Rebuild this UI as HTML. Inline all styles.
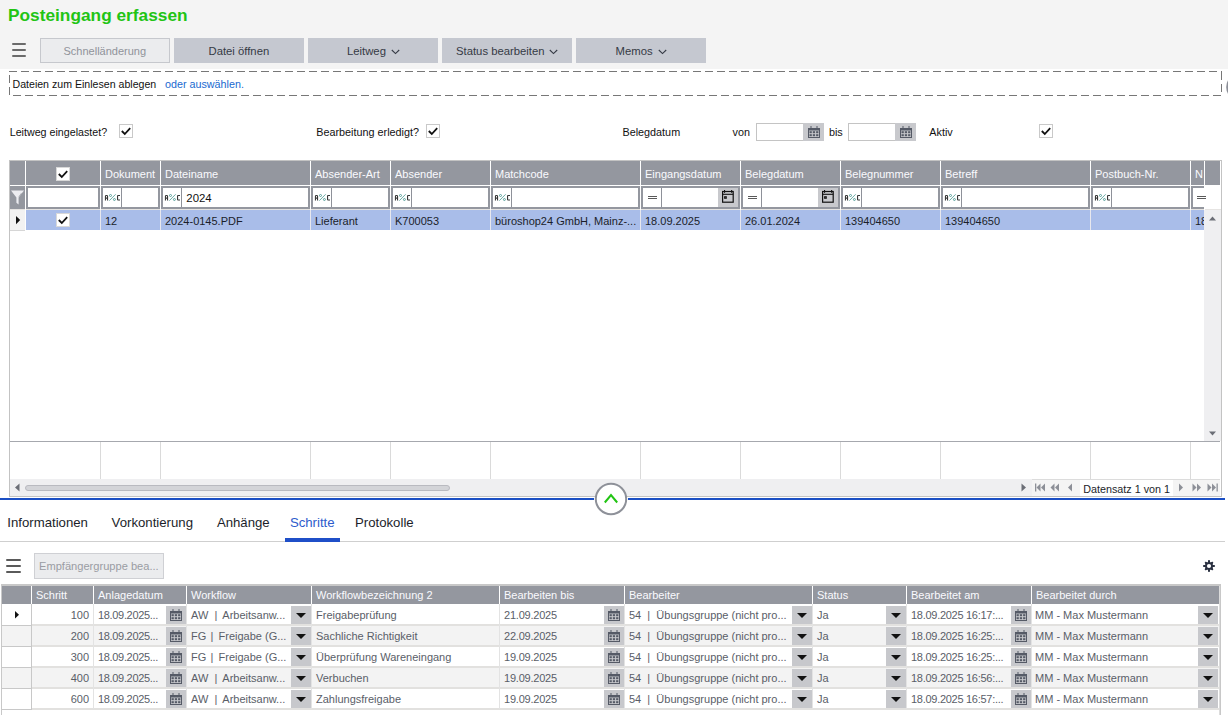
<!DOCTYPE html><html><head><meta charset="utf-8"><style>
html,body{margin:0;padding:0} body{width:1228px;height:715px;overflow:hidden;position:relative;background:#fff;font-family:"Liberation Sans", sans-serif}
div,span,svg{position:absolute;box-sizing:border-box}
.t{white-space:pre;line-height:1.149;}
</style></head><body>
<div style="left:0px;top:0px;width:1228px;height:69px;background:#f4f4f4"></div>
<span class="t" style="left:8px;top:6.34px;font-size:17.3px;color:#22c414;font-weight:700;">Posteingang erfassen</span>
<div style="left:12.3px;top:43.2px;width:14px;height:2px;background:#6b6b6b;border-radius:1px"></div>
<div style="left:12.3px;top:49.2px;width:14px;height:2px;background:#6b6b6b;border-radius:1px"></div>
<div style="left:12.3px;top:55.2px;width:14px;height:2px;background:#6b6b6b;border-radius:1px"></div>
<div style="left:40px;top:38px;width:130px;height:25px;background:#ebecee;border:1px solid #c6c8cd"></div>
<span class="t" style="left:63.5px;top:45.05px;font-size:11.0px;color:#90939a;font-weight:400;">Schnelländerung</span>
<div style="left:174px;top:38px;width:130px;height:25px;background:#c5c8d0"></div>
<span class="t" style="left:208.5px;top:44.77px;font-size:11.3px;color:#353a45;font-weight:400;">Datei öffnen</span>
<div style="left:308px;top:38px;width:130px;height:25px;background:#c5c8d0"></div>
<span class="t" style="left:347px;top:44.77px;font-size:11.3px;color:#353a45;font-weight:400;">Leitweg</span>
<svg style="left:391px;top:49px;" width="9" height="6" viewBox="0 0 9 6"><path d="M0.8 1 L4.5 4.6 L8.2 1" fill="none" stroke="#353a45" stroke-width="1.1"/></svg>
<div style="left:442px;top:38px;width:130px;height:25px;background:#c5c8d0"></div>
<span class="t" style="left:456px;top:44.77px;font-size:11.3px;color:#353a45;font-weight:400;">Status bearbeiten</span>
<svg style="left:549px;top:49px;" width="9" height="6" viewBox="0 0 9 6"><path d="M0.8 1 L4.5 4.6 L8.2 1" fill="none" stroke="#353a45" stroke-width="1.1"/></svg>
<div style="left:576px;top:38px;width:130px;height:25px;background:#c5c8d0"></div>
<span class="t" style="left:615.6px;top:44.77px;font-size:11.3px;color:#353a45;font-weight:400;">Memos</span>
<svg style="left:658px;top:49px;" width="9" height="6" viewBox="0 0 9 6"><path d="M0.8 1 L4.5 4.6 L8.2 1" fill="none" stroke="#353a45" stroke-width="1.1"/></svg>
<svg style="left:0px;top:60px;" width="1228" height="45" viewBox="0 0 1228 45"><line x1="9" y1="11.5" x2="1222" y2="11.5" stroke="#777" stroke-dasharray="8 4"/><line x1="13" y1="35.5" x2="1222" y2="35.5" stroke="#777" stroke-dasharray="8 4"/><line x1="9.5" y1="15" x2="9.5" y2="35" stroke="#777" stroke-dasharray="8 4"/><line x1="1221.5" y1="12" x2="1221.5" y2="36" stroke="#777" stroke-dasharray="8 4"/><circle cx="1239.6" cy="27" r="13.4" fill="#8b8e97"/></svg>
<span class="t" style="left:12.5px;top:78.41px;font-size:10.6px;color:#111;font-weight:400;">Dateien zum Einlesen ablegen</span>
<span class="t" style="left:165px;top:78.27px;font-size:10.75px;color:#1a6ad0;font-weight:400;">oder auswählen.</span>
<span class="t" style="left:9.7px;top:126.32px;font-size:10.7px;color:#111;font-weight:400;">Leitweg eingelastet?</span>
<svg style="left:119px;top:124px;" width="14" height="14" viewBox="0 0 14 14"><rect x="0.5" y="0.5" width="13" height="13" fill="#fff" stroke="#c9c9c9"/><path d="M2.8 7 L5.8 10 L11.2 4.2" fill="none" stroke="#111" stroke-width="1.8"/></svg>
<span class="t" style="left:316.3px;top:126.23px;font-size:10.8px;color:#111;font-weight:400;">Bearbeitung erledigt?</span>
<svg style="left:426px;top:124px;" width="14" height="14" viewBox="0 0 14 14"><rect x="0.5" y="0.5" width="13" height="13" fill="#fff" stroke="#c9c9c9"/><path d="M2.8 7 L5.8 10 L11.2 4.2" fill="none" stroke="#111" stroke-width="1.8"/></svg>
<span class="t" style="left:622.5px;top:126.23px;font-size:10.8px;color:#111;font-weight:400;">Belegdatum</span>
<span class="t" style="left:732.5px;top:126.23px;font-size:10.8px;color:#111;font-weight:400;">von</span>
<div style="left:756px;top:123px;width:68px;height:18px;background:#fff;border:1px solid #c4c4c4"></div>
<div style="left:803px;top:123px;width:21px;height:18px;background:#c8c9cd"></div>
<svg style="left:807.5px;top:126px;" width="12" height="12" viewBox="0 0 12 12"><rect x="0" y="2" width="12" height="10" fill="#555a66"/><rect x="2.5" y="0" width="1" height="3" fill="#555a66"/><rect x="8.5" y="0" width="1" height="3" fill="#555a66"/><rect x="1" y="4.5" width="10" height="6.5" fill="#c8c9cd"/><rect x="1.5" y="5.2" width="2.3" height="2" fill="#555a66"/><rect x="1.5" y="8.2" width="2.3" height="2" fill="#555a66"/><rect x="4.8" y="5.2" width="2.3" height="2" fill="#555a66"/><rect x="4.8" y="8.2" width="2.3" height="2" fill="#555a66"/><rect x="8.1" y="5.2" width="2.3" height="2" fill="#555a66"/><rect x="8.1" y="8.2" width="2.3" height="2" fill="#555a66"/></svg>
<div style="left:848px;top:123px;width:68px;height:18px;background:#fff;border:1px solid #c4c4c4"></div>
<div style="left:895px;top:123px;width:21px;height:18px;background:#c8c9cd"></div>
<svg style="left:899.5px;top:126px;" width="12" height="12" viewBox="0 0 12 12"><rect x="0" y="2" width="12" height="10" fill="#555a66"/><rect x="2.5" y="0" width="1" height="3" fill="#555a66"/><rect x="8.5" y="0" width="1" height="3" fill="#555a66"/><rect x="1" y="4.5" width="10" height="6.5" fill="#c8c9cd"/><rect x="1.5" y="5.2" width="2.3" height="2" fill="#555a66"/><rect x="1.5" y="8.2" width="2.3" height="2" fill="#555a66"/><rect x="4.8" y="5.2" width="2.3" height="2" fill="#555a66"/><rect x="4.8" y="8.2" width="2.3" height="2" fill="#555a66"/><rect x="8.1" y="5.2" width="2.3" height="2" fill="#555a66"/><rect x="8.1" y="8.2" width="2.3" height="2" fill="#555a66"/></svg>
<span class="t" style="left:828.9px;top:126.23px;font-size:10.8px;color:#111;font-weight:400;">bis</span>
<span class="t" style="left:929.3px;top:126.23px;font-size:10.8px;color:#111;font-weight:400;">Aktiv</span>
<svg style="left:1039px;top:124px;" width="14" height="14" viewBox="0 0 14 14"><rect x="0.5" y="0.5" width="13" height="13" fill="#fff" stroke="#c9c9c9"/><path d="M2.8 7 L5.8 10 L11.2 4.2" fill="none" stroke="#111" stroke-width="1.8"/></svg>
<div style="left:9px;top:160px;width:1213px;height:337px;border:1px solid #c3c3c3;background:#fff"></div>
<div style="left:10px;top:161px;width:1210px;height:24px;background:#94979f"></div>
<div style="left:10px;top:186px;width:1195px;height:23px;background:#94979f"></div>
<div style="left:10px;top:209px;width:1211px;height:1px;background:#e6e4e2"></div>
<div style="left:1205px;top:186px;width:16px;height:23px;background:#fff"></div>
<div style="left:10px;top:185px;width:1195px;height:1px;background:#fff"></div>
<div style="left:25px;top:161px;width:1px;height:49px;background:#fff"></div>
<div style="left:100px;top:161px;width:1px;height:49px;background:#fff"></div>
<div style="left:160px;top:161px;width:1px;height:49px;background:#fff"></div>
<div style="left:310px;top:161px;width:1px;height:49px;background:#fff"></div>
<div style="left:390px;top:161px;width:1px;height:49px;background:#fff"></div>
<div style="left:490px;top:161px;width:1px;height:49px;background:#fff"></div>
<div style="left:640px;top:161px;width:1px;height:49px;background:#fff"></div>
<div style="left:740px;top:161px;width:1px;height:49px;background:#fff"></div>
<div style="left:840px;top:161px;width:1px;height:49px;background:#fff"></div>
<div style="left:940px;top:161px;width:1px;height:49px;background:#fff"></div>
<div style="left:1090px;top:161px;width:1px;height:49px;background:#fff"></div>
<div style="left:1190px;top:161px;width:1px;height:49px;background:#fff"></div>
<div style="left:1204px;top:161px;width:1px;height:49px;background:#fff"></div>
<div style="left:101px;top:161px;width:59px;height:24px;overflow:hidden"><span class="t" style="left:4px;top:7.24px;font-size:11px;color:#fafafe">Dokument</span></div>
<div style="left:161px;top:161px;width:149px;height:24px;overflow:hidden"><span class="t" style="left:4px;top:7.24px;font-size:11px;color:#fafafe">Dateiname</span></div>
<div style="left:311px;top:161px;width:79px;height:24px;overflow:hidden"><span class="t" style="left:4px;top:7.24px;font-size:11px;color:#fafafe">Absender-Art</span></div>
<div style="left:391px;top:161px;width:99px;height:24px;overflow:hidden"><span class="t" style="left:4px;top:7.24px;font-size:11px;color:#fafafe">Absender</span></div>
<div style="left:491px;top:161px;width:149px;height:24px;overflow:hidden"><span class="t" style="left:4px;top:7.24px;font-size:11px;color:#fafafe">Matchcode</span></div>
<div style="left:641px;top:161px;width:99px;height:24px;overflow:hidden"><span class="t" style="left:4px;top:7.24px;font-size:11px;color:#fafafe">Eingangsdatum</span></div>
<div style="left:741px;top:161px;width:99px;height:24px;overflow:hidden"><span class="t" style="left:4px;top:7.24px;font-size:11px;color:#fafafe">Belegdatum</span></div>
<div style="left:841px;top:161px;width:99px;height:24px;overflow:hidden"><span class="t" style="left:4px;top:7.24px;font-size:11px;color:#fafafe">Belegnummer</span></div>
<div style="left:941px;top:161px;width:149px;height:24px;overflow:hidden"><span class="t" style="left:4px;top:7.24px;font-size:11px;color:#fafafe">Betreff</span></div>
<div style="left:1091px;top:161px;width:99px;height:24px;overflow:hidden"><span class="t" style="left:4px;top:7.24px;font-size:11px;color:#fafafe">Postbuch-Nr.</span></div>
<div style="left:1191px;top:161px;width:13px;height:24px;overflow:hidden"><span class="t" style="left:4px;top:7.24px;font-size:11px;color:#fafafe">N</span></div>
<svg style="left:56px;top:167px;" width="14" height="14" viewBox="0 0 14 14"><rect x="0.5" y="0.5" width="13" height="13" fill="#fff" stroke="#d8d8d8"/><path d="M2.8 7 L5.8 10 L11.2 4.2" fill="none" stroke="#111" stroke-width="1.8"/></svg>
<svg style="left:11px;top:190px;" width="13" height="19" viewBox="0 0 13 19"><path d="M0 0.5 H13 L7.6 7.5 V14.5 L5.4 12.8 V7.5 Z" fill="#ececf0"/><path d="M7.8 6.8 L10.6 3" stroke="#a9abb2" stroke-width="0.9"/></svg>
<div style="left:28px;top:188px;width:70px;height:19px;background:#fff"></div>
<div style="left:103px;top:188px;width:55px;height:19px;background:#fff"></div>
<div style="left:121px;top:188px;width:1px;height:19px;background:#8e9199"></div>
<svg style="left:104px;top:193.6px;" width="17" height="8" viewBox="0 0 17 8"><path d="M1.45 6.5 V2.3 Q1.45 1.45 2.3 1.45 H2.7 Q3.55 1.45 3.55 2.3 V6.5 M1.45 4.1 H3.55" fill="none" stroke="#383838" stroke-width="1.1"/><path d="M5.4 6.6 L11.6 0.3" stroke="#5aa39c" stroke-width="0.9"/><circle cx="6.5" cy="1.5" r="1" fill="none" stroke="#5aa39c" stroke-width="1"/><circle cx="10.4" cy="5.5" r="1" fill="none" stroke="#5aa39c" stroke-width="1"/><path d="M16 1.55 H14.1 Q13.55 1.55 13.55 2.1 V5.4 Q13.55 5.95 14.1 5.95 H16" fill="none" stroke="#383838" stroke-width="1.1"/></svg>
<div style="left:163px;top:188px;width:145px;height:19px;background:#fff"></div>
<div style="left:181px;top:188px;width:1px;height:19px;background:#8e9199"></div>
<svg style="left:164px;top:193.6px;" width="17" height="8" viewBox="0 0 17 8"><path d="M1.45 6.5 V2.3 Q1.45 1.45 2.3 1.45 H2.7 Q3.55 1.45 3.55 2.3 V6.5 M1.45 4.1 H3.55" fill="none" stroke="#383838" stroke-width="1.1"/><path d="M5.4 6.6 L11.6 0.3" stroke="#5aa39c" stroke-width="0.9"/><circle cx="6.5" cy="1.5" r="1" fill="none" stroke="#5aa39c" stroke-width="1"/><circle cx="10.4" cy="5.5" r="1" fill="none" stroke="#5aa39c" stroke-width="1"/><path d="M16 1.55 H14.1 Q13.55 1.55 13.55 2.1 V5.4 Q13.55 5.95 14.1 5.95 H16" fill="none" stroke="#383838" stroke-width="1.1"/></svg>
<div style="left:313px;top:188px;width:75px;height:19px;background:#fff"></div>
<div style="left:331px;top:188px;width:1px;height:19px;background:#8e9199"></div>
<svg style="left:314px;top:193.6px;" width="17" height="8" viewBox="0 0 17 8"><path d="M1.45 6.5 V2.3 Q1.45 1.45 2.3 1.45 H2.7 Q3.55 1.45 3.55 2.3 V6.5 M1.45 4.1 H3.55" fill="none" stroke="#383838" stroke-width="1.1"/><path d="M5.4 6.6 L11.6 0.3" stroke="#5aa39c" stroke-width="0.9"/><circle cx="6.5" cy="1.5" r="1" fill="none" stroke="#5aa39c" stroke-width="1"/><circle cx="10.4" cy="5.5" r="1" fill="none" stroke="#5aa39c" stroke-width="1"/><path d="M16 1.55 H14.1 Q13.55 1.55 13.55 2.1 V5.4 Q13.55 5.95 14.1 5.95 H16" fill="none" stroke="#383838" stroke-width="1.1"/></svg>
<div style="left:393px;top:188px;width:95px;height:19px;background:#fff"></div>
<div style="left:411px;top:188px;width:1px;height:19px;background:#8e9199"></div>
<svg style="left:394px;top:193.6px;" width="17" height="8" viewBox="0 0 17 8"><path d="M1.45 6.5 V2.3 Q1.45 1.45 2.3 1.45 H2.7 Q3.55 1.45 3.55 2.3 V6.5 M1.45 4.1 H3.55" fill="none" stroke="#383838" stroke-width="1.1"/><path d="M5.4 6.6 L11.6 0.3" stroke="#5aa39c" stroke-width="0.9"/><circle cx="6.5" cy="1.5" r="1" fill="none" stroke="#5aa39c" stroke-width="1"/><circle cx="10.4" cy="5.5" r="1" fill="none" stroke="#5aa39c" stroke-width="1"/><path d="M16 1.55 H14.1 Q13.55 1.55 13.55 2.1 V5.4 Q13.55 5.95 14.1 5.95 H16" fill="none" stroke="#383838" stroke-width="1.1"/></svg>
<div style="left:493px;top:188px;width:145px;height:19px;background:#fff"></div>
<div style="left:511px;top:188px;width:1px;height:19px;background:#8e9199"></div>
<svg style="left:494px;top:193.6px;" width="17" height="8" viewBox="0 0 17 8"><path d="M1.45 6.5 V2.3 Q1.45 1.45 2.3 1.45 H2.7 Q3.55 1.45 3.55 2.3 V6.5 M1.45 4.1 H3.55" fill="none" stroke="#383838" stroke-width="1.1"/><path d="M5.4 6.6 L11.6 0.3" stroke="#5aa39c" stroke-width="0.9"/><circle cx="6.5" cy="1.5" r="1" fill="none" stroke="#5aa39c" stroke-width="1"/><circle cx="10.4" cy="5.5" r="1" fill="none" stroke="#5aa39c" stroke-width="1"/><path d="M16 1.55 H14.1 Q13.55 1.55 13.55 2.1 V5.4 Q13.55 5.95 14.1 5.95 H16" fill="none" stroke="#383838" stroke-width="1.1"/></svg>
<div style="left:643px;top:188px;width:95px;height:19px;background:#fff"></div>
<div style="left:661px;top:188px;width:1px;height:19px;background:#8e9199"></div>
<svg style="left:648px;top:196px;" width="10" height="4" viewBox="0 0 10 4"><rect x="0" y="0" width="9" height="1" fill="#5a5a5a"/><rect x="0" y="2" width="9" height="1" fill="#5a5a5a"/></svg>
<div style="left:718px;top:188px;width:20px;height:19px;background:#c8c9cd"></div>
<svg style="left:722px;top:190px;" width="12" height="14" viewBox="0 0 12 14"><rect x="0.6" y="1.5" width="10.6" height="10.7" fill="none" stroke="#111" stroke-width="1.2"/><line x1="0.6" y1="4.3" x2="11.2" y2="4.3" stroke="#111" stroke-width="1.1"/><rect x="2" y="0" width="1.1" height="2.8" fill="#111"/><rect x="9.1" y="0" width="1.1" height="2.8" fill="#111"/><rect x="2.6" y="6.7" width="1.7" height="1.6" fill="none" stroke="#111" stroke-width="1"/></svg>
<div style="left:743px;top:188px;width:95px;height:19px;background:#fff"></div>
<div style="left:761px;top:188px;width:1px;height:19px;background:#8e9199"></div>
<svg style="left:748px;top:196px;" width="10" height="4" viewBox="0 0 10 4"><rect x="0" y="0" width="9" height="1" fill="#5a5a5a"/><rect x="0" y="2" width="9" height="1" fill="#5a5a5a"/></svg>
<div style="left:818px;top:188px;width:20px;height:19px;background:#c8c9cd"></div>
<svg style="left:822px;top:190px;" width="12" height="14" viewBox="0 0 12 14"><rect x="0.6" y="1.5" width="10.6" height="10.7" fill="none" stroke="#111" stroke-width="1.2"/><line x1="0.6" y1="4.3" x2="11.2" y2="4.3" stroke="#111" stroke-width="1.1"/><rect x="2" y="0" width="1.1" height="2.8" fill="#111"/><rect x="9.1" y="0" width="1.1" height="2.8" fill="#111"/><rect x="2.6" y="6.7" width="1.7" height="1.6" fill="none" stroke="#111" stroke-width="1"/></svg>
<div style="left:843px;top:188px;width:95px;height:19px;background:#fff"></div>
<div style="left:861px;top:188px;width:1px;height:19px;background:#8e9199"></div>
<svg style="left:844px;top:193.6px;" width="17" height="8" viewBox="0 0 17 8"><path d="M1.45 6.5 V2.3 Q1.45 1.45 2.3 1.45 H2.7 Q3.55 1.45 3.55 2.3 V6.5 M1.45 4.1 H3.55" fill="none" stroke="#383838" stroke-width="1.1"/><path d="M5.4 6.6 L11.6 0.3" stroke="#5aa39c" stroke-width="0.9"/><circle cx="6.5" cy="1.5" r="1" fill="none" stroke="#5aa39c" stroke-width="1"/><circle cx="10.4" cy="5.5" r="1" fill="none" stroke="#5aa39c" stroke-width="1"/><path d="M16 1.55 H14.1 Q13.55 1.55 13.55 2.1 V5.4 Q13.55 5.95 14.1 5.95 H16" fill="none" stroke="#383838" stroke-width="1.1"/></svg>
<div style="left:943px;top:188px;width:145px;height:19px;background:#fff"></div>
<div style="left:961px;top:188px;width:1px;height:19px;background:#8e9199"></div>
<svg style="left:944px;top:193.6px;" width="17" height="8" viewBox="0 0 17 8"><path d="M1.45 6.5 V2.3 Q1.45 1.45 2.3 1.45 H2.7 Q3.55 1.45 3.55 2.3 V6.5 M1.45 4.1 H3.55" fill="none" stroke="#383838" stroke-width="1.1"/><path d="M5.4 6.6 L11.6 0.3" stroke="#5aa39c" stroke-width="0.9"/><circle cx="6.5" cy="1.5" r="1" fill="none" stroke="#5aa39c" stroke-width="1"/><circle cx="10.4" cy="5.5" r="1" fill="none" stroke="#5aa39c" stroke-width="1"/><path d="M16 1.55 H14.1 Q13.55 1.55 13.55 2.1 V5.4 Q13.55 5.95 14.1 5.95 H16" fill="none" stroke="#383838" stroke-width="1.1"/></svg>
<div style="left:1093px;top:188px;width:95px;height:19px;background:#fff"></div>
<div style="left:1111px;top:188px;width:1px;height:19px;background:#8e9199"></div>
<svg style="left:1094px;top:193.6px;" width="17" height="8" viewBox="0 0 17 8"><path d="M1.45 6.5 V2.3 Q1.45 1.45 2.3 1.45 H2.7 Q3.55 1.45 3.55 2.3 V6.5 M1.45 4.1 H3.55" fill="none" stroke="#383838" stroke-width="1.1"/><path d="M5.4 6.6 L11.6 0.3" stroke="#5aa39c" stroke-width="0.9"/><circle cx="6.5" cy="1.5" r="1" fill="none" stroke="#5aa39c" stroke-width="1"/><circle cx="10.4" cy="5.5" r="1" fill="none" stroke="#5aa39c" stroke-width="1"/><path d="M16 1.55 H14.1 Q13.55 1.55 13.55 2.1 V5.4 Q13.55 5.95 14.1 5.95 H16" fill="none" stroke="#383838" stroke-width="1.1"/></svg>
<div style="left:1193px;top:188px;width:11px;height:19px;background:#fff"></div>
<svg style="left:1197px;top:196px;" width="10" height="4" viewBox="0 0 10 4"><rect x="0" y="0" width="9" height="1" fill="#5a5a5a"/><rect x="0" y="2" width="9" height="1" fill="#5a5a5a"/></svg>
<span class="t" style="left:186.3px;top:191.68px;font-size:11.4px;color:#111;font-weight:400;">2024</span>
<div style="left:10px;top:210px;width:15px;height:20px;background:#f2f2f2"></div>
<div style="left:26px;top:210px;width:1179px;height:20px;background:#a9bde9"></div>
<div style="left:100px;top:210px;width:1px;height:20px;background:#e8e8ee"></div>
<div style="left:160px;top:210px;width:1px;height:20px;background:#e8e8ee"></div>
<div style="left:310px;top:210px;width:1px;height:20px;background:#e8e8ee"></div>
<div style="left:390px;top:210px;width:1px;height:20px;background:#e8e8ee"></div>
<div style="left:490px;top:210px;width:1px;height:20px;background:#e8e8ee"></div>
<div style="left:640px;top:210px;width:1px;height:20px;background:#e8e8ee"></div>
<div style="left:740px;top:210px;width:1px;height:20px;background:#e8e8ee"></div>
<div style="left:840px;top:210px;width:1px;height:20px;background:#e8e8ee"></div>
<div style="left:940px;top:210px;width:1px;height:20px;background:#e8e8ee"></div>
<div style="left:1090px;top:210px;width:1px;height:20px;background:#e8e8ee"></div>
<div style="left:1190px;top:210px;width:1px;height:20px;background:#e8e8ee"></div>
<div style="left:1204px;top:210px;width:1px;height:20px;background:#e8e8ee"></div>
<svg style="left:16px;top:216px;" width="5" height="9" viewBox="0 0 5 9"><path d="M0 0 L4.2 4.1 L0 8.2 Z" fill="#111"/></svg>
<svg style="left:56px;top:213px;" width="14" height="14" viewBox="0 0 14 14"><rect x="0.5" y="0.5" width="13" height="13" fill="#fff" stroke="#d8d8d8"/><path d="M2.8 7 L5.8 10 L11.2 4.2" fill="none" stroke="#111" stroke-width="1.8"/></svg>
<div style="left:101px;top:210px;width:59px;height:20px;overflow:hidden"><span class="t" style="left:4px;top:5.04px;font-size:11px;color:#1b1e2a">12</span></div>
<div style="left:161px;top:210px;width:149px;height:20px;overflow:hidden"><span class="t" style="left:4px;top:5.04px;font-size:11px;color:#1b1e2a">2024-0145.PDF</span></div>
<div style="left:311px;top:210px;width:79px;height:20px;overflow:hidden"><span class="t" style="left:4px;top:5.04px;font-size:11px;color:#1b1e2a">Lieferant</span></div>
<div style="left:391px;top:210px;width:99px;height:20px;overflow:hidden"><span class="t" style="left:4px;top:5.04px;font-size:11px;color:#1b1e2a">K700053</span></div>
<div style="left:491px;top:210px;width:149px;height:20px;overflow:hidden"><span class="t" style="left:4px;top:5.04px;font-size:11px;color:#1b1e2a">büroshop24 GmbH, Mainz-...</span></div>
<div style="left:641px;top:210px;width:99px;height:20px;overflow:hidden"><span class="t" style="left:4px;top:5.04px;font-size:11px;color:#1b1e2a">18.09.2025</span></div>
<div style="left:741px;top:210px;width:99px;height:20px;overflow:hidden"><span class="t" style="left:4px;top:5.04px;font-size:11px;color:#1b1e2a">26.01.2024</span></div>
<div style="left:841px;top:210px;width:99px;height:20px;overflow:hidden"><span class="t" style="left:4px;top:5.04px;font-size:11px;color:#1b1e2a">139404650</span></div>
<div style="left:941px;top:210px;width:149px;height:20px;overflow:hidden"><span class="t" style="left:4px;top:5.04px;font-size:11px;color:#1b1e2a">139404650</span></div>
<div style="left:1191px;top:210px;width:13px;height:20px;overflow:hidden"><span class="t" style="left:4px;top:5.04px;font-size:11px;color:#1b1e2a">18.09</span></div>
<div style="left:10px;top:230px;width:15px;height:1px;background:#d6d6d6"></div>
<div style="left:1204px;top:210px;width:17px;height:231px;background:#efeff1"></div>
<svg style="left:1209px;top:215.5px;" width="7" height="5" viewBox="0 0 7 5"><path d="M0 4.5 L3.5 0.5 L7 4.5 Z" fill="#6b6e76"/></svg>
<svg style="left:1209px;top:430.5px;" width="7" height="5" viewBox="0 0 7 5"><path d="M0 0.5 L3.5 4.5 L7 0.5 Z" fill="#6b6e76"/></svg>
<div style="left:10px;top:441px;width:1210px;height:1px;background:#a6a8ae"></div>
<div style="left:100px;top:442px;width:1px;height:37px;background:#dadada"></div>
<div style="left:160px;top:442px;width:1px;height:37px;background:#dadada"></div>
<div style="left:310px;top:442px;width:1px;height:37px;background:#dadada"></div>
<div style="left:390px;top:442px;width:1px;height:37px;background:#dadada"></div>
<div style="left:490px;top:442px;width:1px;height:37px;background:#dadada"></div>
<div style="left:640px;top:442px;width:1px;height:37px;background:#dadada"></div>
<div style="left:740px;top:442px;width:1px;height:37px;background:#dadada"></div>
<div style="left:840px;top:442px;width:1px;height:37px;background:#dadada"></div>
<div style="left:940px;top:442px;width:1px;height:37px;background:#dadada"></div>
<div style="left:1090px;top:442px;width:1px;height:37px;background:#dadada"></div>
<div style="left:1190px;top:442px;width:1px;height:37px;background:#dadada"></div>
<div style="left:10px;top:479px;width:1022px;height:17px;background:#efeff1"></div>
<svg style="left:14px;top:483px;" width="6" height="9" viewBox="0 0 6 9"><path d="M5.5 0.5 L1 4.5 L5.5 8.5 Z" fill="#6b6e76"/></svg>
<div style="left:25px;top:485px;width:425px;height:6px;background:#d3d4d8;border:1px solid #b9bac0;border-radius:3px"></div>
<svg style="left:1021px;top:483px;" width="6" height="9" viewBox="0 0 6 9"><path d="M0.5 0.5 L5 4.5 L0.5 8.5 Z" fill="#6b6e76"/></svg>
<div style="left:1032px;top:479px;width:188px;height:17px;background:#f4f4f4;border-top:1px solid #dcdcdc"></div>
<div style="left:1080px;top:480px;width:93px;height:16px;background:#fff"></div>
<span class="t" style="left:1083.3px;top:483.27px;font-size:10.75px;color:#1b1e2a;font-weight:400;">Datensatz 1 von 1</span>
<svg style="left:1035px;top:483px;" width="11" height="9" viewBox="0 0 11 9"><rect x="0" y="0.5" width="1.3" height="8" fill="#8c8f97"/><path d="M5.5 0.5 L1.5 4.5 L5.5 8.5Z M10 0.5 L6 4.5 L10 8.5Z" fill="#8c8f97"/></svg>
<svg style="left:1050px;top:483px;" width="10" height="9" viewBox="0 0 10 9"><path d="M4.5 0.5 L0.5 4.5 L4.5 8.5Z M9 0.5 L5 4.5 L9 8.5Z" fill="#8c8f97"/></svg>
<svg style="left:1067px;top:483px;" width="6" height="9" viewBox="0 0 6 9"><path d="M5 0.5 L1 4.5 L5 8.5Z" fill="#8c8f97"/></svg>
<svg style="left:1178px;top:483px;" width="6" height="9" viewBox="0 0 6 9"><path d="M1 0.5 L5 4.5 L1 8.5Z" fill="#8c8f97"/></svg>
<svg style="left:1192px;top:483px;" width="10" height="9" viewBox="0 0 10 9"><path d="M0.5 0.5 L4.5 4.5 L0.5 8.5Z M5 0.5 L9 4.5 L5 8.5Z" fill="#8c8f97"/></svg>
<svg style="left:1207px;top:483px;" width="11" height="9" viewBox="0 0 11 9"><path d="M0.5 0.5 L4.5 4.5 L0.5 8.5Z M5 0.5 L9 4.5 L5 8.5Z" fill="#8c8f97"/><rect x="9.5" y="0.5" width="1.3" height="8" fill="#8c8f97"/></svg>
<div style="left:0px;top:498px;width:594px;height:2px;background:#1b4fc4"></div>
<div style="left:628px;top:498px;width:597px;height:2px;background:#1b4fc4"></div>
<svg style="left:594px;top:482px;" width="34" height="34" viewBox="0 0 34 34"><circle cx="17" cy="17" r="15.2" fill="#fff" stroke="#8e9199" stroke-width="2"/><path d="M10.8 20.5 L17 13 L23.2 20.5" fill="none" stroke="#22c414" stroke-width="2"/></svg>
<span class="t" style="left:7.3px;top:515.05px;font-size:13.2px;color:#1b1e2a;font-weight:400;">Informationen</span>
<span class="t" style="left:111.6px;top:515.05px;font-size:13.2px;color:#1b1e2a;font-weight:400;">Vorkontierung</span>
<span class="t" style="left:216.9px;top:515.05px;font-size:13.2px;color:#1b1e2a;font-weight:400;">Anhänge</span>
<span class="t" style="left:289.9px;top:515.05px;font-size:13.2px;color:#2d5bcc;font-weight:400;">Schritte</span>
<span class="t" style="left:355px;top:515.05px;font-size:13.2px;color:#1b1e2a;font-weight:400;">Protokolle</span>
<div style="left:0px;top:541px;width:1225px;height:1px;background:#cfcfcf"></div>
<div style="left:285px;top:538px;width:55px;height:4px;background:#1f4fc8"></div>
<div style="left:6px;top:559px;width:15px;height:2px;background:#5a5a5a;border-radius:1px"></div>
<div style="left:6px;top:565px;width:15px;height:2px;background:#5a5a5a;border-radius:1px"></div>
<div style="left:6px;top:571px;width:15px;height:2px;background:#5a5a5a;border-radius:1px"></div>
<div style="left:34px;top:553px;width:130px;height:26px;background:#ebecee;border:1px solid #cfd0d4"></div>
<span class="t" style="left:39px;top:559.95px;font-size:11.1px;color:#9a9ca3;font-weight:400;">Empfängergruppe bea...</span>
<svg style="left:1202px;top:559px;" width="14" height="14" viewBox="0 0 14 14"><g fill="#2a3040"><rect x="3.2" y="3.2" width="7.6" height="7.6" rx="0.6"/><rect x="6" y="1.2" width="2" height="3"/><rect x="6" y="9.8" width="2" height="3"/><rect x="1.2" y="6" width="3" height="2"/><rect x="9.8" y="6" width="3" height="2"/><rect x="6.1" y="1.6" width="1.8" height="2.5" transform="rotate(45 7 7)"/><rect x="6.1" y="1.6" width="1.8" height="2.5" transform="rotate(135 7 7)"/><rect x="6.1" y="1.6" width="1.8" height="2.5" transform="rotate(225 7 7)"/><rect x="6.1" y="1.6" width="1.8" height="2.5" transform="rotate(315 7 7)"/></g><circle cx="7" cy="7" r="2.1" fill="#fff"/></svg>
<div style="left:1px;top:584px;width:1220px;height:131px;border:1px solid #c8c8c8;border-bottom:none;background:#fff"></div>
<div style="left:1px;top:584px;width:1220px;height:2px;background:#c8c8c8"></div>
<div style="left:2px;top:586px;width:1217px;height:18px;background:#94979f"></div>
<div style="left:31px;top:586px;width:1px;height:18px;background:#fff"></div>
<div style="left:93px;top:586px;width:1px;height:18px;background:#fff"></div>
<div style="left:186px;top:586px;width:1px;height:18px;background:#fff"></div>
<div style="left:311px;top:586px;width:1px;height:18px;background:#fff"></div>
<div style="left:499px;top:586px;width:1px;height:18px;background:#fff"></div>
<div style="left:624px;top:586px;width:1px;height:18px;background:#fff"></div>
<div style="left:812px;top:586px;width:1px;height:18px;background:#fff"></div>
<div style="left:906px;top:586px;width:1px;height:18px;background:#fff"></div>
<div style="left:1031px;top:586px;width:1px;height:18px;background:#fff"></div>
<div style="left:32px;top:586px;width:61px;height:18px;overflow:hidden"><span class="t" style="left:4px;top:3.04px;font-size:11px;color:#fafafe">Schritt</span></div>
<div style="left:94px;top:586px;width:92px;height:18px;overflow:hidden"><span class="t" style="left:4px;top:3.04px;font-size:11px;color:#fafafe">Anlagedatum</span></div>
<div style="left:187px;top:586px;width:124px;height:18px;overflow:hidden"><span class="t" style="left:4px;top:3.04px;font-size:11px;color:#fafafe">Workflow</span></div>
<div style="left:312px;top:586px;width:187px;height:18px;overflow:hidden"><span class="t" style="left:4px;top:3.04px;font-size:11px;color:#fafafe">Workflowbezeichnung 2</span></div>
<div style="left:500px;top:586px;width:124px;height:18px;overflow:hidden"><span class="t" style="left:4px;top:3.04px;font-size:11px;color:#fafafe">Bearbeiten bis</span></div>
<div style="left:625px;top:586px;width:187px;height:18px;overflow:hidden"><span class="t" style="left:4px;top:3.04px;font-size:11px;color:#fafafe">Bearbeiter</span></div>
<div style="left:813px;top:586px;width:93px;height:18px;overflow:hidden"><span class="t" style="left:4px;top:3.04px;font-size:11px;color:#fafafe">Status</span></div>
<div style="left:907px;top:586px;width:124px;height:18px;overflow:hidden"><span class="t" style="left:4px;top:3.04px;font-size:11px;color:#fafafe">Bearbeitet am</span></div>
<div style="left:1032px;top:586px;width:187px;height:18px;overflow:hidden"><span class="t" style="left:4px;top:3.04px;font-size:11px;color:#fafafe">Bearbeitet durch</span></div>
<div style="left:2px;top:604px;width:1217px;height:21px;background:#fff"></div>
<div style="left:2px;top:625px;width:1217px;height:21px;background:#f3f3f3"></div>
<div style="left:2px;top:646px;width:1217px;height:21px;background:#fff"></div>
<div style="left:2px;top:667px;width:1217px;height:21px;background:#f3f3f3"></div>
<div style="left:2px;top:688px;width:1217px;height:21px;background:#fff"></div>
<div style="left:2px;top:625px;width:29px;height:1px;background:#c8c8c8"></div>
<div style="left:32px;top:624px;width:1187px;height:2px;background:#e2e1df"></div>
<div style="left:31px;top:604px;width:1px;height:22px;background:#c8c8c8"></div>
<div style="left:93px;top:604px;width:1px;height:21px;background:#e3e3e3"></div>
<div style="left:186px;top:604px;width:1px;height:21px;background:#e3e3e3"></div>
<div style="left:311px;top:604px;width:1px;height:21px;background:#e3e3e3"></div>
<div style="left:499px;top:604px;width:1px;height:21px;background:#e3e3e3"></div>
<div style="left:624px;top:604px;width:1px;height:21px;background:#e3e3e3"></div>
<div style="left:812px;top:604px;width:1px;height:21px;background:#e3e3e3"></div>
<div style="left:906px;top:604px;width:1px;height:21px;background:#e3e3e3"></div>
<div style="left:1031px;top:604px;width:1px;height:21px;background:#e3e3e3"></div>
<div style="left:2px;top:646px;width:29px;height:1px;background:#c8c8c8"></div>
<div style="left:32px;top:645px;width:1187px;height:2px;background:#e2e1df"></div>
<div style="left:31px;top:625px;width:1px;height:22px;background:#c8c8c8"></div>
<div style="left:93px;top:625px;width:1px;height:21px;background:#e3e3e3"></div>
<div style="left:186px;top:625px;width:1px;height:21px;background:#e3e3e3"></div>
<div style="left:311px;top:625px;width:1px;height:21px;background:#e3e3e3"></div>
<div style="left:499px;top:625px;width:1px;height:21px;background:#e3e3e3"></div>
<div style="left:624px;top:625px;width:1px;height:21px;background:#e3e3e3"></div>
<div style="left:812px;top:625px;width:1px;height:21px;background:#e3e3e3"></div>
<div style="left:906px;top:625px;width:1px;height:21px;background:#e3e3e3"></div>
<div style="left:1031px;top:625px;width:1px;height:21px;background:#e3e3e3"></div>
<div style="left:2px;top:667px;width:29px;height:1px;background:#c8c8c8"></div>
<div style="left:32px;top:666px;width:1187px;height:2px;background:#e2e1df"></div>
<div style="left:31px;top:646px;width:1px;height:22px;background:#c8c8c8"></div>
<div style="left:93px;top:646px;width:1px;height:21px;background:#e3e3e3"></div>
<div style="left:186px;top:646px;width:1px;height:21px;background:#e3e3e3"></div>
<div style="left:311px;top:646px;width:1px;height:21px;background:#e3e3e3"></div>
<div style="left:499px;top:646px;width:1px;height:21px;background:#e3e3e3"></div>
<div style="left:624px;top:646px;width:1px;height:21px;background:#e3e3e3"></div>
<div style="left:812px;top:646px;width:1px;height:21px;background:#e3e3e3"></div>
<div style="left:906px;top:646px;width:1px;height:21px;background:#e3e3e3"></div>
<div style="left:1031px;top:646px;width:1px;height:21px;background:#e3e3e3"></div>
<div style="left:2px;top:688px;width:29px;height:1px;background:#c8c8c8"></div>
<div style="left:32px;top:687px;width:1187px;height:2px;background:#e2e1df"></div>
<div style="left:31px;top:667px;width:1px;height:22px;background:#c8c8c8"></div>
<div style="left:93px;top:667px;width:1px;height:21px;background:#e3e3e3"></div>
<div style="left:186px;top:667px;width:1px;height:21px;background:#e3e3e3"></div>
<div style="left:311px;top:667px;width:1px;height:21px;background:#e3e3e3"></div>
<div style="left:499px;top:667px;width:1px;height:21px;background:#e3e3e3"></div>
<div style="left:624px;top:667px;width:1px;height:21px;background:#e3e3e3"></div>
<div style="left:812px;top:667px;width:1px;height:21px;background:#e3e3e3"></div>
<div style="left:906px;top:667px;width:1px;height:21px;background:#e3e3e3"></div>
<div style="left:1031px;top:667px;width:1px;height:21px;background:#e3e3e3"></div>
<div style="left:2px;top:709px;width:29px;height:1px;background:#c8c8c8"></div>
<div style="left:32px;top:708px;width:1187px;height:2px;background:#e2e1df"></div>
<div style="left:31px;top:688px;width:1px;height:22px;background:#c8c8c8"></div>
<div style="left:93px;top:688px;width:1px;height:21px;background:#e3e3e3"></div>
<div style="left:186px;top:688px;width:1px;height:21px;background:#e3e3e3"></div>
<div style="left:311px;top:688px;width:1px;height:21px;background:#e3e3e3"></div>
<div style="left:499px;top:688px;width:1px;height:21px;background:#e3e3e3"></div>
<div style="left:624px;top:688px;width:1px;height:21px;background:#e3e3e3"></div>
<div style="left:812px;top:688px;width:1px;height:21px;background:#e3e3e3"></div>
<div style="left:906px;top:688px;width:1px;height:21px;background:#e3e3e3"></div>
<div style="left:1031px;top:688px;width:1px;height:21px;background:#e3e3e3"></div>
<span class="t" style="right:1139px;top:608.75px;font-size:11px;color:#5a5e68;font-weight:400">100</span>
<span class="t" style="left:98px;top:608.75px;font-size:11px;color:#5a5e68;font-weight:400;letter-spacing:-0.33px">18.09.2025...</span>
<div style="left:166px;top:606px;width:20px;height:18px;background:#c7c8cc"></div>
<svg style="left:170px;top:609px;" width="12" height="12" viewBox="0 0 12 12"><rect x="0" y="2" width="12" height="10" fill="#555a66"/><rect x="2.5" y="0" width="1" height="3" fill="#555a66"/><rect x="8.5" y="0" width="1" height="3" fill="#555a66"/><rect x="1" y="4.5" width="10" height="6.5" fill="#c8c9cd"/><rect x="1.5" y="5.2" width="2.3" height="2" fill="#555a66"/><rect x="1.5" y="8.2" width="2.3" height="2" fill="#555a66"/><rect x="4.8" y="5.2" width="2.3" height="2" fill="#555a66"/><rect x="4.8" y="8.2" width="2.3" height="2" fill="#555a66"/><rect x="8.1" y="5.2" width="2.3" height="2" fill="#555a66"/><rect x="8.1" y="8.2" width="2.3" height="2" fill="#555a66"/></svg>
<span class="t" style="left:191px;top:608.75px;font-size:11px;color:#5a5e68;font-weight:400;">AW</span>
<span class="t" style="left:214.5px;top:608.75px;font-size:11px;color:#5a5e68;font-weight:400;">|</span>
<span class="t" style="left:222.3px;top:608.75px;font-size:11px;color:#5a5e68;font-weight:400;">Arbeitsanw...</span>
<div style="left:291px;top:606px;width:20px;height:18px;background:#c7c8cc"></div>
<svg style="left:296px;top:613px;" width="10" height="5" viewBox="0 0 10 5"><path d="M0 0 H10 L5.0 5 Z" fill="#111"/></svg>
<span class="t" style="left:316px;top:608.75px;font-size:11px;color:#5a5e68;font-weight:400;">Freigabeprüfung</span>
<span class="t" style="left:504px;top:608.75px;font-size:11px;color:#5a5e68;font-weight:400;letter-spacing:-0.22px">21.09.2025</span>
<div style="left:604px;top:606px;width:20px;height:18px;background:#c7c8cc"></div>
<svg style="left:608px;top:609px;" width="12" height="12" viewBox="0 0 12 12"><rect x="0" y="2" width="12" height="10" fill="#555a66"/><rect x="2.5" y="0" width="1" height="3" fill="#555a66"/><rect x="8.5" y="0" width="1" height="3" fill="#555a66"/><rect x="1" y="4.5" width="10" height="6.5" fill="#c8c9cd"/><rect x="1.5" y="5.2" width="2.3" height="2" fill="#555a66"/><rect x="1.5" y="8.2" width="2.3" height="2" fill="#555a66"/><rect x="4.8" y="5.2" width="2.3" height="2" fill="#555a66"/><rect x="4.8" y="8.2" width="2.3" height="2" fill="#555a66"/><rect x="8.1" y="5.2" width="2.3" height="2" fill="#555a66"/><rect x="8.1" y="8.2" width="2.3" height="2" fill="#555a66"/></svg>
<span class="t" style="left:629px;top:608.75px;font-size:11px;color:#5a5e68;font-weight:400;">54  |  Übungsgruppe (nicht pro...</span>
<div style="left:792px;top:606px;width:20px;height:18px;background:#c7c8cc"></div>
<svg style="left:797px;top:613px;" width="10" height="5" viewBox="0 0 10 5"><path d="M0 0 H10 L5.0 5 Z" fill="#111"/></svg>
<span class="t" style="left:817px;top:608.75px;font-size:11px;color:#5a5e68;font-weight:400;">Ja</span>
<div style="left:886px;top:606px;width:20px;height:18px;background:#c7c8cc"></div>
<svg style="left:891px;top:613px;" width="10" height="5" viewBox="0 0 10 5"><path d="M0 0 H10 L5.0 5 Z" fill="#111"/></svg>
<span class="t" style="left:911px;top:608.75px;font-size:11px;color:#5a5e68;font-weight:400;letter-spacing:-0.28px">18.09.2025 16:17:...</span>
<div style="left:1011px;top:606px;width:20px;height:18px;background:#c7c8cc"></div>
<svg style="left:1015px;top:609px;" width="12" height="12" viewBox="0 0 12 12"><rect x="0" y="2" width="12" height="10" fill="#555a66"/><rect x="2.5" y="0" width="1" height="3" fill="#555a66"/><rect x="8.5" y="0" width="1" height="3" fill="#555a66"/><rect x="1" y="4.5" width="10" height="6.5" fill="#c8c9cd"/><rect x="1.5" y="5.2" width="2.3" height="2" fill="#555a66"/><rect x="1.5" y="8.2" width="2.3" height="2" fill="#555a66"/><rect x="4.8" y="5.2" width="2.3" height="2" fill="#555a66"/><rect x="4.8" y="8.2" width="2.3" height="2" fill="#555a66"/><rect x="8.1" y="5.2" width="2.3" height="2" fill="#555a66"/><rect x="8.1" y="8.2" width="2.3" height="2" fill="#555a66"/></svg>
<span class="t" style="left:1035px;top:608.75px;font-size:11px;color:#5a5e68;font-weight:400;">MM - Max Mustermann</span>
<div style="left:1198px;top:606px;width:20px;height:18px;background:#c7c8cc"></div>
<svg style="left:1203px;top:613px;" width="10" height="5" viewBox="0 0 10 5"><path d="M0 0 H10 L5.0 5 Z" fill="#111"/></svg>
<span class="t" style="right:1139px;top:629.75px;font-size:11px;color:#5a5e68;font-weight:400">200</span>
<span class="t" style="left:98px;top:629.75px;font-size:11px;color:#5a5e68;font-weight:400;letter-spacing:-0.33px">18.09.2025...</span>
<div style="left:166px;top:627px;width:20px;height:18px;background:#c7c8cc"></div>
<svg style="left:170px;top:630px;" width="12" height="12" viewBox="0 0 12 12"><rect x="0" y="2" width="12" height="10" fill="#555a66"/><rect x="2.5" y="0" width="1" height="3" fill="#555a66"/><rect x="8.5" y="0" width="1" height="3" fill="#555a66"/><rect x="1" y="4.5" width="10" height="6.5" fill="#c8c9cd"/><rect x="1.5" y="5.2" width="2.3" height="2" fill="#555a66"/><rect x="1.5" y="8.2" width="2.3" height="2" fill="#555a66"/><rect x="4.8" y="5.2" width="2.3" height="2" fill="#555a66"/><rect x="4.8" y="8.2" width="2.3" height="2" fill="#555a66"/><rect x="8.1" y="5.2" width="2.3" height="2" fill="#555a66"/><rect x="8.1" y="8.2" width="2.3" height="2" fill="#555a66"/></svg>
<span class="t" style="left:191px;top:629.75px;font-size:11px;color:#5a5e68;font-weight:400;">FG</span>
<span class="t" style="left:210.5px;top:629.75px;font-size:11px;color:#5a5e68;font-weight:400;">|</span>
<span class="t" style="left:218.5px;top:629.75px;font-size:11px;color:#5a5e68;font-weight:400;">Freigabe (G...</span>
<div style="left:291px;top:627px;width:20px;height:18px;background:#c7c8cc"></div>
<svg style="left:296px;top:634px;" width="10" height="5" viewBox="0 0 10 5"><path d="M0 0 H10 L5.0 5 Z" fill="#111"/></svg>
<span class="t" style="left:316px;top:629.75px;font-size:11px;color:#5a5e68;font-weight:400;">Sachliche Richtigkeit</span>
<span class="t" style="left:504px;top:629.75px;font-size:11px;color:#5a5e68;font-weight:400;letter-spacing:-0.22px">22.09.2025</span>
<div style="left:604px;top:627px;width:20px;height:18px;background:#c7c8cc"></div>
<svg style="left:608px;top:630px;" width="12" height="12" viewBox="0 0 12 12"><rect x="0" y="2" width="12" height="10" fill="#555a66"/><rect x="2.5" y="0" width="1" height="3" fill="#555a66"/><rect x="8.5" y="0" width="1" height="3" fill="#555a66"/><rect x="1" y="4.5" width="10" height="6.5" fill="#c8c9cd"/><rect x="1.5" y="5.2" width="2.3" height="2" fill="#555a66"/><rect x="1.5" y="8.2" width="2.3" height="2" fill="#555a66"/><rect x="4.8" y="5.2" width="2.3" height="2" fill="#555a66"/><rect x="4.8" y="8.2" width="2.3" height="2" fill="#555a66"/><rect x="8.1" y="5.2" width="2.3" height="2" fill="#555a66"/><rect x="8.1" y="8.2" width="2.3" height="2" fill="#555a66"/></svg>
<span class="t" style="left:629px;top:629.75px;font-size:11px;color:#5a5e68;font-weight:400;">54  |  Übungsgruppe (nicht pro...</span>
<div style="left:792px;top:627px;width:20px;height:18px;background:#c7c8cc"></div>
<svg style="left:797px;top:634px;" width="10" height="5" viewBox="0 0 10 5"><path d="M0 0 H10 L5.0 5 Z" fill="#111"/></svg>
<span class="t" style="left:817px;top:629.75px;font-size:11px;color:#5a5e68;font-weight:400;">Ja</span>
<div style="left:886px;top:627px;width:20px;height:18px;background:#c7c8cc"></div>
<svg style="left:891px;top:634px;" width="10" height="5" viewBox="0 0 10 5"><path d="M0 0 H10 L5.0 5 Z" fill="#111"/></svg>
<span class="t" style="left:911px;top:629.75px;font-size:11px;color:#5a5e68;font-weight:400;letter-spacing:-0.28px">18.09.2025 16:25:...</span>
<div style="left:1011px;top:627px;width:20px;height:18px;background:#c7c8cc"></div>
<svg style="left:1015px;top:630px;" width="12" height="12" viewBox="0 0 12 12"><rect x="0" y="2" width="12" height="10" fill="#555a66"/><rect x="2.5" y="0" width="1" height="3" fill="#555a66"/><rect x="8.5" y="0" width="1" height="3" fill="#555a66"/><rect x="1" y="4.5" width="10" height="6.5" fill="#c8c9cd"/><rect x="1.5" y="5.2" width="2.3" height="2" fill="#555a66"/><rect x="1.5" y="8.2" width="2.3" height="2" fill="#555a66"/><rect x="4.8" y="5.2" width="2.3" height="2" fill="#555a66"/><rect x="4.8" y="8.2" width="2.3" height="2" fill="#555a66"/><rect x="8.1" y="5.2" width="2.3" height="2" fill="#555a66"/><rect x="8.1" y="8.2" width="2.3" height="2" fill="#555a66"/></svg>
<span class="t" style="left:1035px;top:629.75px;font-size:11px;color:#5a5e68;font-weight:400;">MM - Max Mustermann</span>
<div style="left:1198px;top:627px;width:20px;height:18px;background:#c7c8cc"></div>
<svg style="left:1203px;top:634px;" width="10" height="5" viewBox="0 0 10 5"><path d="M0 0 H10 L5.0 5 Z" fill="#111"/></svg>
<span class="t" style="right:1139px;top:650.75px;font-size:11px;color:#5a5e68;font-weight:400">300</span>
<span class="t" style="left:98px;top:650.75px;font-size:11px;color:#5a5e68;font-weight:400;letter-spacing:-0.33px">18.09.2025...</span>
<div style="left:166px;top:648px;width:20px;height:18px;background:#c7c8cc"></div>
<svg style="left:170px;top:651px;" width="12" height="12" viewBox="0 0 12 12"><rect x="0" y="2" width="12" height="10" fill="#555a66"/><rect x="2.5" y="0" width="1" height="3" fill="#555a66"/><rect x="8.5" y="0" width="1" height="3" fill="#555a66"/><rect x="1" y="4.5" width="10" height="6.5" fill="#c8c9cd"/><rect x="1.5" y="5.2" width="2.3" height="2" fill="#555a66"/><rect x="1.5" y="8.2" width="2.3" height="2" fill="#555a66"/><rect x="4.8" y="5.2" width="2.3" height="2" fill="#555a66"/><rect x="4.8" y="8.2" width="2.3" height="2" fill="#555a66"/><rect x="8.1" y="5.2" width="2.3" height="2" fill="#555a66"/><rect x="8.1" y="8.2" width="2.3" height="2" fill="#555a66"/></svg>
<span class="t" style="left:191px;top:650.75px;font-size:11px;color:#5a5e68;font-weight:400;">FG</span>
<span class="t" style="left:210.5px;top:650.75px;font-size:11px;color:#5a5e68;font-weight:400;">|</span>
<span class="t" style="left:218.5px;top:650.75px;font-size:11px;color:#5a5e68;font-weight:400;">Freigabe (G...</span>
<div style="left:291px;top:648px;width:20px;height:18px;background:#c7c8cc"></div>
<svg style="left:296px;top:655px;" width="10" height="5" viewBox="0 0 10 5"><path d="M0 0 H10 L5.0 5 Z" fill="#111"/></svg>
<span class="t" style="left:316px;top:650.75px;font-size:11px;color:#5a5e68;font-weight:400;">Überprüfung Wareneingang</span>
<span class="t" style="left:504px;top:650.75px;font-size:11px;color:#5a5e68;font-weight:400;letter-spacing:-0.22px">19.09.2025</span>
<div style="left:604px;top:648px;width:20px;height:18px;background:#c7c8cc"></div>
<svg style="left:608px;top:651px;" width="12" height="12" viewBox="0 0 12 12"><rect x="0" y="2" width="12" height="10" fill="#555a66"/><rect x="2.5" y="0" width="1" height="3" fill="#555a66"/><rect x="8.5" y="0" width="1" height="3" fill="#555a66"/><rect x="1" y="4.5" width="10" height="6.5" fill="#c8c9cd"/><rect x="1.5" y="5.2" width="2.3" height="2" fill="#555a66"/><rect x="1.5" y="8.2" width="2.3" height="2" fill="#555a66"/><rect x="4.8" y="5.2" width="2.3" height="2" fill="#555a66"/><rect x="4.8" y="8.2" width="2.3" height="2" fill="#555a66"/><rect x="8.1" y="5.2" width="2.3" height="2" fill="#555a66"/><rect x="8.1" y="8.2" width="2.3" height="2" fill="#555a66"/></svg>
<span class="t" style="left:629px;top:650.75px;font-size:11px;color:#5a5e68;font-weight:400;">54  |  Übungsgruppe (nicht pro...</span>
<div style="left:792px;top:648px;width:20px;height:18px;background:#c7c8cc"></div>
<svg style="left:797px;top:655px;" width="10" height="5" viewBox="0 0 10 5"><path d="M0 0 H10 L5.0 5 Z" fill="#111"/></svg>
<span class="t" style="left:817px;top:650.75px;font-size:11px;color:#5a5e68;font-weight:400;">Ja</span>
<div style="left:886px;top:648px;width:20px;height:18px;background:#c7c8cc"></div>
<svg style="left:891px;top:655px;" width="10" height="5" viewBox="0 0 10 5"><path d="M0 0 H10 L5.0 5 Z" fill="#111"/></svg>
<span class="t" style="left:911px;top:650.75px;font-size:11px;color:#5a5e68;font-weight:400;letter-spacing:-0.28px">18.09.2025 16:25:...</span>
<div style="left:1011px;top:648px;width:20px;height:18px;background:#c7c8cc"></div>
<svg style="left:1015px;top:651px;" width="12" height="12" viewBox="0 0 12 12"><rect x="0" y="2" width="12" height="10" fill="#555a66"/><rect x="2.5" y="0" width="1" height="3" fill="#555a66"/><rect x="8.5" y="0" width="1" height="3" fill="#555a66"/><rect x="1" y="4.5" width="10" height="6.5" fill="#c8c9cd"/><rect x="1.5" y="5.2" width="2.3" height="2" fill="#555a66"/><rect x="1.5" y="8.2" width="2.3" height="2" fill="#555a66"/><rect x="4.8" y="5.2" width="2.3" height="2" fill="#555a66"/><rect x="4.8" y="8.2" width="2.3" height="2" fill="#555a66"/><rect x="8.1" y="5.2" width="2.3" height="2" fill="#555a66"/><rect x="8.1" y="8.2" width="2.3" height="2" fill="#555a66"/></svg>
<span class="t" style="left:1035px;top:650.75px;font-size:11px;color:#5a5e68;font-weight:400;">MM - Max Mustermann</span>
<div style="left:1198px;top:648px;width:20px;height:18px;background:#c7c8cc"></div>
<svg style="left:1203px;top:655px;" width="10" height="5" viewBox="0 0 10 5"><path d="M0 0 H10 L5.0 5 Z" fill="#111"/></svg>
<span class="t" style="right:1139px;top:671.75px;font-size:11px;color:#5a5e68;font-weight:400">400</span>
<span class="t" style="left:98px;top:671.75px;font-size:11px;color:#5a5e68;font-weight:400;letter-spacing:-0.33px">18.09.2025...</span>
<div style="left:166px;top:669px;width:20px;height:18px;background:#c7c8cc"></div>
<svg style="left:170px;top:672px;" width="12" height="12" viewBox="0 0 12 12"><rect x="0" y="2" width="12" height="10" fill="#555a66"/><rect x="2.5" y="0" width="1" height="3" fill="#555a66"/><rect x="8.5" y="0" width="1" height="3" fill="#555a66"/><rect x="1" y="4.5" width="10" height="6.5" fill="#c8c9cd"/><rect x="1.5" y="5.2" width="2.3" height="2" fill="#555a66"/><rect x="1.5" y="8.2" width="2.3" height="2" fill="#555a66"/><rect x="4.8" y="5.2" width="2.3" height="2" fill="#555a66"/><rect x="4.8" y="8.2" width="2.3" height="2" fill="#555a66"/><rect x="8.1" y="5.2" width="2.3" height="2" fill="#555a66"/><rect x="8.1" y="8.2" width="2.3" height="2" fill="#555a66"/></svg>
<span class="t" style="left:191px;top:671.75px;font-size:11px;color:#5a5e68;font-weight:400;">AW</span>
<span class="t" style="left:214.5px;top:671.75px;font-size:11px;color:#5a5e68;font-weight:400;">|</span>
<span class="t" style="left:222.3px;top:671.75px;font-size:11px;color:#5a5e68;font-weight:400;">Arbeitsanw...</span>
<div style="left:291px;top:669px;width:20px;height:18px;background:#c7c8cc"></div>
<svg style="left:296px;top:676px;" width="10" height="5" viewBox="0 0 10 5"><path d="M0 0 H10 L5.0 5 Z" fill="#111"/></svg>
<span class="t" style="left:316px;top:671.75px;font-size:11px;color:#5a5e68;font-weight:400;">Verbuchen</span>
<span class="t" style="left:504px;top:671.75px;font-size:11px;color:#5a5e68;font-weight:400;letter-spacing:-0.22px">19.09.2025</span>
<div style="left:604px;top:669px;width:20px;height:18px;background:#c7c8cc"></div>
<svg style="left:608px;top:672px;" width="12" height="12" viewBox="0 0 12 12"><rect x="0" y="2" width="12" height="10" fill="#555a66"/><rect x="2.5" y="0" width="1" height="3" fill="#555a66"/><rect x="8.5" y="0" width="1" height="3" fill="#555a66"/><rect x="1" y="4.5" width="10" height="6.5" fill="#c8c9cd"/><rect x="1.5" y="5.2" width="2.3" height="2" fill="#555a66"/><rect x="1.5" y="8.2" width="2.3" height="2" fill="#555a66"/><rect x="4.8" y="5.2" width="2.3" height="2" fill="#555a66"/><rect x="4.8" y="8.2" width="2.3" height="2" fill="#555a66"/><rect x="8.1" y="5.2" width="2.3" height="2" fill="#555a66"/><rect x="8.1" y="8.2" width="2.3" height="2" fill="#555a66"/></svg>
<span class="t" style="left:629px;top:671.75px;font-size:11px;color:#5a5e68;font-weight:400;">54  |  Übungsgruppe (nicht pro...</span>
<div style="left:792px;top:669px;width:20px;height:18px;background:#c7c8cc"></div>
<svg style="left:797px;top:676px;" width="10" height="5" viewBox="0 0 10 5"><path d="M0 0 H10 L5.0 5 Z" fill="#111"/></svg>
<span class="t" style="left:817px;top:671.75px;font-size:11px;color:#5a5e68;font-weight:400;">Ja</span>
<div style="left:886px;top:669px;width:20px;height:18px;background:#c7c8cc"></div>
<svg style="left:891px;top:676px;" width="10" height="5" viewBox="0 0 10 5"><path d="M0 0 H10 L5.0 5 Z" fill="#111"/></svg>
<span class="t" style="left:911px;top:671.75px;font-size:11px;color:#5a5e68;font-weight:400;letter-spacing:-0.28px">18.09.2025 16:56:...</span>
<div style="left:1011px;top:669px;width:20px;height:18px;background:#c7c8cc"></div>
<svg style="left:1015px;top:672px;" width="12" height="12" viewBox="0 0 12 12"><rect x="0" y="2" width="12" height="10" fill="#555a66"/><rect x="2.5" y="0" width="1" height="3" fill="#555a66"/><rect x="8.5" y="0" width="1" height="3" fill="#555a66"/><rect x="1" y="4.5" width="10" height="6.5" fill="#c8c9cd"/><rect x="1.5" y="5.2" width="2.3" height="2" fill="#555a66"/><rect x="1.5" y="8.2" width="2.3" height="2" fill="#555a66"/><rect x="4.8" y="5.2" width="2.3" height="2" fill="#555a66"/><rect x="4.8" y="8.2" width="2.3" height="2" fill="#555a66"/><rect x="8.1" y="5.2" width="2.3" height="2" fill="#555a66"/><rect x="8.1" y="8.2" width="2.3" height="2" fill="#555a66"/></svg>
<span class="t" style="left:1035px;top:671.75px;font-size:11px;color:#5a5e68;font-weight:400;">MM - Max Mustermann</span>
<div style="left:1198px;top:669px;width:20px;height:18px;background:#c7c8cc"></div>
<svg style="left:1203px;top:676px;" width="10" height="5" viewBox="0 0 10 5"><path d="M0 0 H10 L5.0 5 Z" fill="#111"/></svg>
<span class="t" style="right:1139px;top:692.75px;font-size:11px;color:#5a5e68;font-weight:400">600</span>
<span class="t" style="left:98px;top:692.75px;font-size:11px;color:#5a5e68;font-weight:400;letter-spacing:-0.33px">18.09.2025...</span>
<div style="left:166px;top:690px;width:20px;height:18px;background:#c7c8cc"></div>
<svg style="left:170px;top:693px;" width="12" height="12" viewBox="0 0 12 12"><rect x="0" y="2" width="12" height="10" fill="#555a66"/><rect x="2.5" y="0" width="1" height="3" fill="#555a66"/><rect x="8.5" y="0" width="1" height="3" fill="#555a66"/><rect x="1" y="4.5" width="10" height="6.5" fill="#c8c9cd"/><rect x="1.5" y="5.2" width="2.3" height="2" fill="#555a66"/><rect x="1.5" y="8.2" width="2.3" height="2" fill="#555a66"/><rect x="4.8" y="5.2" width="2.3" height="2" fill="#555a66"/><rect x="4.8" y="8.2" width="2.3" height="2" fill="#555a66"/><rect x="8.1" y="5.2" width="2.3" height="2" fill="#555a66"/><rect x="8.1" y="8.2" width="2.3" height="2" fill="#555a66"/></svg>
<span class="t" style="left:191px;top:692.75px;font-size:11px;color:#5a5e68;font-weight:400;">AW</span>
<span class="t" style="left:214.5px;top:692.75px;font-size:11px;color:#5a5e68;font-weight:400;">|</span>
<span class="t" style="left:222.3px;top:692.75px;font-size:11px;color:#5a5e68;font-weight:400;">Arbeitsanw...</span>
<div style="left:291px;top:690px;width:20px;height:18px;background:#c7c8cc"></div>
<svg style="left:296px;top:697px;" width="10" height="5" viewBox="0 0 10 5"><path d="M0 0 H10 L5.0 5 Z" fill="#111"/></svg>
<span class="t" style="left:316px;top:692.75px;font-size:11px;color:#5a5e68;font-weight:400;">Zahlungsfreigabe</span>
<span class="t" style="left:504px;top:692.75px;font-size:11px;color:#5a5e68;font-weight:400;letter-spacing:-0.22px">19.09.2025</span>
<div style="left:604px;top:690px;width:20px;height:18px;background:#c7c8cc"></div>
<svg style="left:608px;top:693px;" width="12" height="12" viewBox="0 0 12 12"><rect x="0" y="2" width="12" height="10" fill="#555a66"/><rect x="2.5" y="0" width="1" height="3" fill="#555a66"/><rect x="8.5" y="0" width="1" height="3" fill="#555a66"/><rect x="1" y="4.5" width="10" height="6.5" fill="#c8c9cd"/><rect x="1.5" y="5.2" width="2.3" height="2" fill="#555a66"/><rect x="1.5" y="8.2" width="2.3" height="2" fill="#555a66"/><rect x="4.8" y="5.2" width="2.3" height="2" fill="#555a66"/><rect x="4.8" y="8.2" width="2.3" height="2" fill="#555a66"/><rect x="8.1" y="5.2" width="2.3" height="2" fill="#555a66"/><rect x="8.1" y="8.2" width="2.3" height="2" fill="#555a66"/></svg>
<span class="t" style="left:629px;top:692.75px;font-size:11px;color:#5a5e68;font-weight:400;">54  |  Übungsgruppe (nicht pro...</span>
<div style="left:792px;top:690px;width:20px;height:18px;background:#c7c8cc"></div>
<svg style="left:797px;top:697px;" width="10" height="5" viewBox="0 0 10 5"><path d="M0 0 H10 L5.0 5 Z" fill="#111"/></svg>
<span class="t" style="left:817px;top:692.75px;font-size:11px;color:#5a5e68;font-weight:400;">Ja</span>
<div style="left:886px;top:690px;width:20px;height:18px;background:#c7c8cc"></div>
<svg style="left:891px;top:697px;" width="10" height="5" viewBox="0 0 10 5"><path d="M0 0 H10 L5.0 5 Z" fill="#111"/></svg>
<span class="t" style="left:911px;top:692.75px;font-size:11px;color:#5a5e68;font-weight:400;letter-spacing:-0.28px">18.09.2025 16:57:...</span>
<div style="left:1011px;top:690px;width:20px;height:18px;background:#c7c8cc"></div>
<svg style="left:1015px;top:693px;" width="12" height="12" viewBox="0 0 12 12"><rect x="0" y="2" width="12" height="10" fill="#555a66"/><rect x="2.5" y="0" width="1" height="3" fill="#555a66"/><rect x="8.5" y="0" width="1" height="3" fill="#555a66"/><rect x="1" y="4.5" width="10" height="6.5" fill="#c8c9cd"/><rect x="1.5" y="5.2" width="2.3" height="2" fill="#555a66"/><rect x="1.5" y="8.2" width="2.3" height="2" fill="#555a66"/><rect x="4.8" y="5.2" width="2.3" height="2" fill="#555a66"/><rect x="4.8" y="8.2" width="2.3" height="2" fill="#555a66"/><rect x="8.1" y="5.2" width="2.3" height="2" fill="#555a66"/><rect x="8.1" y="8.2" width="2.3" height="2" fill="#555a66"/></svg>
<span class="t" style="left:1035px;top:692.75px;font-size:11px;color:#5a5e68;font-weight:400;">MM - Max Mustermann</span>
<div style="left:1198px;top:690px;width:20px;height:18px;background:#c7c8cc"></div>
<svg style="left:1203px;top:697px;" width="10" height="5" viewBox="0 0 10 5"><path d="M0 0 H10 L5.0 5 Z" fill="#111"/></svg>
<svg style="left:15px;top:611px;" width="5" height="9" viewBox="0 0 5 9"><path d="M0 0 L4 3.8 L0 7.6 Z" fill="#111"/></svg>
<div style="left:1219px;top:586px;width:1px;height:129px;background:#dcdcdc"></div>
</body></html>
